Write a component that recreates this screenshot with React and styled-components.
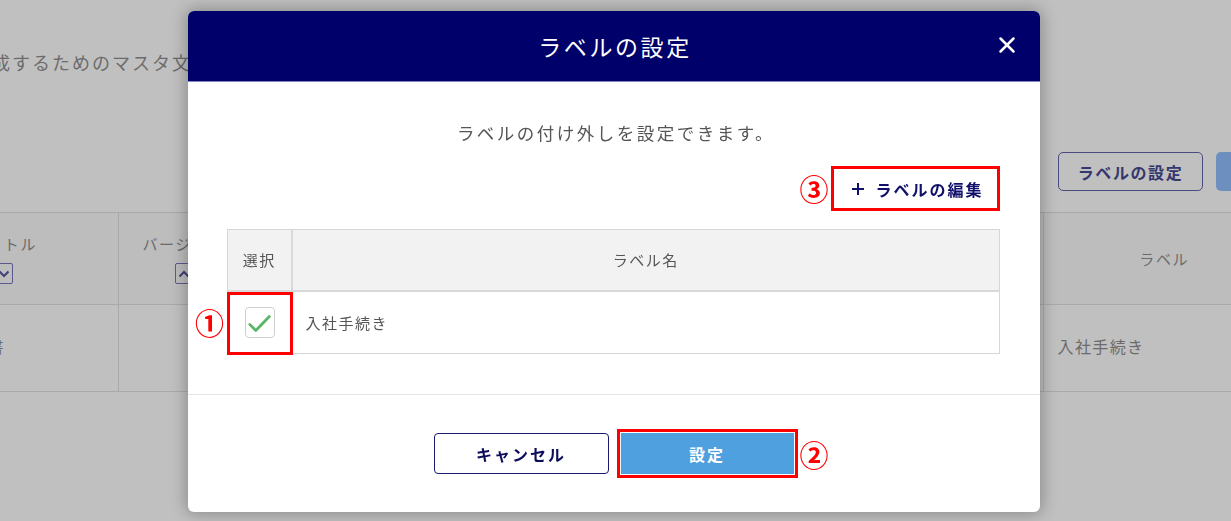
import React from 'react';
import styled, { createGlobalStyle } from 'styled-components';
import { X as CloseIcon } from 'lucide-react';

const GlobalStyle = createGlobalStyle`
  html, body {
    margin: 0;
    padding: 0;
  }

  body {
    font-family: "Noto Sans CJK JP", "Noto Sans", sans-serif;
    overflow: hidden;
  }

  * {
    box-sizing: border-box;
  }
`;

/* ---------- page behind the dialog (already dimmed) ---------- */

const StyledPage = styled.div`
  background-color: #c0c0c0;
  color: #6b6b6b;
  height: 521px;
  overflow: hidden;
  padding-top: 50px;
  width: 1231px;
`;

const StyledIntro = styled.p`
  font-size: 18px;
  letter-spacing: 2px;
  line-height: 24px;
  margin: 0 0 0 -28px;
  white-space: nowrap;
`;

const StyledToolbar = styled.div`
  display: flex;
  gap: 13px;
  justify-content: flex-end;
  margin: 78px -105px 0 0;
`;

const StyledGhostButton = styled.button`
  background: transparent;
  border: 1px solid #4a4a80;
  border-radius: 5px;
  color: #36366e;
  font-family: inherit;
  font-size: 16px;
  font-weight: 700;
  height: 39px;
  letter-spacing: 1.6px;
  width: 145px;
`;

const StyledSolidButton = styled.button`
  background: #6c8fc0;
  border: none;
  border-radius: 5px;
  color: #dde4ee;
  font-family: inherit;
  font-size: 16px;
  font-weight: 700;
  height: 39px;
  width: 120px;
`;

const StyledListTable = styled.table`
  border-collapse: collapse;
  margin: 21px 0 0 -102px;
  table-layout: fixed;
  width: 1400px;

  th,
  td {
    border-bottom: 1px solid #a9a9a9;
    border-right: 1px solid #a9a9a9;
    font-size: 15px;
    font-weight: 400;
    letter-spacing: 1.7px;
    padding: 0;
  }

  tr:first-child th {
    border-top: 1px solid #a9a9a9;
  }

  th {
    background-color: #bdbdbd;
    height: 92px;
    text-align: center;
  }

  th:first-child {
    padding-right: 8px;
  }

  th:last-child {
    padding-right: 12px;
  }

  td {
    font-size: 16px;
    height: 87px;
    letter-spacing: 1.4px;
    padding: 0 0 4px 20px;
    white-space: nowrap;
  }

  td:last-child {
    padding-left: 14px;
  }
`;

const StyledHeadCell = styled.div`
  align-items: center;
  display: flex;
  flex-direction: column;
  gap: 8px;
  line-height: 22px;
`;

const StyledSortBox = styled.span`
  align-items: center;
  border: 1.5px solid #5a5a8c;
  border-radius: 2px;
  color: #3e3e78;
  display: flex;
  height: 21px;
  justify-content: center;
  width: 19px;
`;

const SortBox = ({ up }) => (
  <StyledSortBox>
    <svg width="12" height="8" viewBox="0 0 12 8" fill="none">
      <path
        d={up ? 'M1.5 6.5 6 2l4.5 4.5' : 'M1.5 1.5 6 6l4.5-4.5'}
        stroke="currentColor"
        strokeWidth="2"
      />
    </svg>
  </StyledSortBox>
);

/* ---------- dialog ---------- */

const StyledOverlay = styled.div`
  display: flex;
  inset: 0;
  justify-content: center;
  padding: 11px 4px 0 0;
  position: fixed;
`;

const StyledModal = styled.div`
  background-color: #ffffff;
  border-radius: 6px;
  box-shadow: 0 0 16px 2px rgba(0, 0, 0, 0.28);
  height: 501px;
  overflow: hidden;
  width: 852px;
`;

const StyledModalHeader = styled.header`
  align-items: center;
  background-color: #00006a;
  border-bottom: 1px solid #8585c4;
  display: grid;
  grid-template-columns: 1fr auto 1fr;
  height: 71px;
  padding: 0 20px;
`;

const StyledModalTitle = styled.h2`
  color: #ffffff;
  font-size: 23px;
  font-weight: 400;
  grid-column: 2;
  letter-spacing: 2.6px;
  margin: 0 0 0 3px;
`;

const StyledCloseButton = styled.button`
  background: none;
  border: none;
  color: #ffffff;
  cursor: pointer;
  display: flex;
  justify-self: end;
  margin-top: -3px;
  padding: 0;
`;

const StyledModalBody = styled.div`
  padding: 39px 40px 40px 39px;
`;

const StyledLead = styled.p`
  color: #555555;
  font-size: 17.5px;
  letter-spacing: 2.5px;
  line-height: 24px;
  margin: 0 0 0 6px;
  text-align: center;
`;

const StyledEditRow = styled.div`
  align-items: center;
  display: flex;
  gap: 3px;
  justify-content: flex-end;
  margin-top: 21px;
`;

const StyledMarker = styled.span`
  color: #ff0000;
  font-size: 29px;
  font-weight: 700;
  line-height: 1;
`;

const StyledEditLink = styled.button`
  align-items: center;
  background: #ffffff;
  border: 3px solid #ff0000;
  color: #10106a;
  display: flex;
  font-family: inherit;
  font-size: 16px;
  font-weight: 700;
  gap: 11px;
  height: 45px;
  letter-spacing: 2px;
  padding: 0 13px 0 18px;
`;

const StyledLabelTable = styled.table`
  border: 1px solid #d6d6d6;
  border-collapse: collapse;
  color: #555555;
  margin-top: 18px;
  table-layout: fixed;
  width: 100%;

  th {
    background-color: #f2f2f2;
    border-bottom: 2px solid #d9d9d9;
    border-right: 2px solid #d9d9d9;
    font-size: 15px;
    font-weight: 400;
    height: 61px;
    letter-spacing: 1.5px;
    padding: 0;
    text-align: center;
  }

  th:last-child {
    border-right: none;
  }

  td {
    border-right: 1px solid #d9d9d9;
    font-size: 15px;
    height: 63px;
    letter-spacing: 1.5px;
    padding: 0 0 0 13px;
  }

  td:last-child {
    border-right: none;
  }
`;

const StyledCheckCell = styled.td`
  && {
    padding: 0;
  }
  position: relative;

  ${({ highlighted }) =>
    highlighted &&
    `
    &::after {
      border: 3px solid #ff0000;
      content: '';
      inset: 0 -1px -2px -1px;
      position: absolute;
    }
  `}
`;

const StyledCellMarker = styled(StyledMarker)`
  position: absolute;
  right: calc(100% + 2px);
  top: 50%;
  transform: translateY(-50%);
`;

const StyledCheckbox = styled.span`
  align-items: center;
  border: 1.5px solid #cfcfcf;
  border-radius: 4px;
  display: flex;
  height: 31px;
  justify-content: center;
  margin: 0 auto;
  width: 30px;
`;

const StyledModalFooter = styled.footer`
  border-top: 1px solid #e4e4e4;
  display: flex;
  gap: 12px;
  justify-content: center;
  padding: 38px 0 0;
`;

const StyledCancelButton = styled.button`
  background: #ffffff;
  border: 1px solid #1a1a70;
  border-radius: 4px;
  color: #0c0c5c;
  font-family: inherit;
  font-size: 16px;
  font-weight: 700;
  height: 41px;
  letter-spacing: 2px;
  width: 175px;
`;

const StyledSubmitButton = styled.button`
  background: #4fa0df;
  border: none;
  color: #ffffff;
  font-family: inherit;
  font-size: 16px;
  font-weight: 700;
  height: 41px;
  letter-spacing: 2px;
  outline: 3px solid #ff0000;
  outline-offset: 1px;
  position: relative;
  width: 173px;
`;

const StyledButtonMarker = styled(StyledMarker)`
  left: calc(100% + 6px);
  letter-spacing: 0;
  position: absolute;
  top: 50%;
  transform: translateY(-50%);
`;

const PlusIcon = () => (
  <svg width="12" height="12" viewBox="0 0 12 12">
    <path d="M6 0v12M0 6h12" stroke="currentColor" strokeWidth="2" />
  </svg>
);

const CheckMark = () => (
  <svg width="30" height="31" viewBox="0 0 30 31" fill="none">
    <path
      d="M4 17.5 10.5 24 25 9"
      stroke="#58b766"
      strokeWidth="3"
      strokeLinecap="round"
      strokeLinejoin="round"
    />
  </svg>
);

const labels = [{ id: 1, name: '入社手続き', checked: true }];

const App = () => (
  <>
    <GlobalStyle />
    <StyledPage>
      <StyledIntro>作成するためのマスタ文書を登録・管理します。</StyledIntro>

      <StyledToolbar>
        <StyledGhostButton>ラベルの設定</StyledGhostButton>
        <StyledSolidButton>新規登録</StyledSolidButton>
      </StyledToolbar>

      <StyledListTable>
        <colgroup>
          <col style={{ width: 220 }} />
          <col style={{ width: 132 }} />
          <col style={{ width: 793 }} />
          <col />
        </colgroup>
        <thead>
          <tr>
            <th>
              <StyledHeadCell>
                タイトル
                <SortBox />
              </StyledHeadCell>
            </th>
            <th>
              <StyledHeadCell>
                バージョン
                <SortBox up />
              </StyledHeadCell>
            </th>
            <th />
            <th>ラベル</th>
          </tr>
        </thead>
        <tbody>
          <tr>
            <td>入社案内書</td>
            <td />
            <td />
            <td>入社手続き</td>
          </tr>
        </tbody>
      </StyledListTable>
    </StyledPage>

    <StyledOverlay>
      <StyledModal>
        <StyledModalHeader>
          <StyledModalTitle>ラベルの設定</StyledModalTitle>
          <StyledCloseButton>
            <CloseIcon size={26} strokeWidth={2.3} />
          </StyledCloseButton>
        </StyledModalHeader>

        <StyledModalBody>
          <StyledLead>ラベルの付け外しを設定できます。</StyledLead>

          <StyledEditRow>
            <StyledMarker>③</StyledMarker>
            <StyledEditLink>
              <PlusIcon />
              ラベルの編集
            </StyledEditLink>
          </StyledEditRow>

          <StyledLabelTable>
            <colgroup>
              <col style={{ width: 65 }} />
              <col />
            </colgroup>
            <thead>
              <tr>
                <th>選択</th>
                <th>ラベル名</th>
              </tr>
            </thead>
            <tbody>
              {labels.map((label) => (
                <tr key={label.id}>
                  <StyledCheckCell highlighted>
                    <StyledCellMarker>①</StyledCellMarker>
                    <StyledCheckbox>{label.checked && <CheckMark />}</StyledCheckbox>
                  </StyledCheckCell>
                  <td>{label.name}</td>
                </tr>
              ))}
            </tbody>
          </StyledLabelTable>
        </StyledModalBody>

        <StyledModalFooter>
          <StyledCancelButton>キャンセル</StyledCancelButton>
          <StyledSubmitButton>
            設定
            <StyledButtonMarker>②</StyledButtonMarker>
          </StyledSubmitButton>
        </StyledModalFooter>
      </StyledModal>
    </StyledOverlay>
  </>
);

export default App;
